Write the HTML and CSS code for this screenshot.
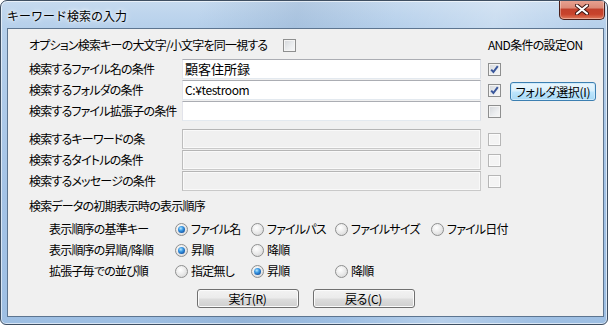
FILE: index.html
```html
<!DOCTYPE html>
<html lang="ja">
<head>
<meta charset="utf-8">
<title>キーワード検索の入力</title>
<link rel="stylesheet" href="styles.css">
</head>
<body>
<div class="window">
  <div class="titlebar">
    <span class="title">キーワード検索の入力</span>
    <div class="close">
      <svg width="14" height="11" viewBox="0 0 14 11">
        <path d="M2 1.5 L12 9.5 M12 1.5 L2 9.5" stroke="#3b1512" stroke-width="4" stroke-linecap="round"/>
        <path d="M2 1.5 L12 9.5 M12 1.5 L2 9.5" stroke="#ffffff" stroke-width="2.2" stroke-linecap="round"/>
      </svg>
    </div>
  </div>
  <div class="client">
    <div class="content">
      <div class="form-a">
        <div class="opt"><span class="lbl">オプション検索キーの大文字/小文字を同一視する</span><span class="cb"></span></div>
        <div class="and lbl">AND条件の設定ON</div>

        <span class="lbl fl">検索するファイル名の条件</span>
        <div class="tb">顧客住所録</div>
        <span class="cb checked"><svg width="11" height="11" viewBox="0 0 11 11"><path d="M2.2 5.6 L4.4 8 L8.8 2.2" fill="none" stroke="#3a579b" stroke-width="2"/></svg></span>

        <span class="lbl fl">検索するフォルダの条件</span>
        <div class="tb"><span class="latin">C:¥testroom</span></div>
        <span class="cb checked"><svg width="11" height="11" viewBox="0 0 11 11"><path d="M2.2 5.6 L4.4 8 L8.8 2.2" fill="none" stroke="#3a579b" stroke-width="2"/></svg></span>
        <button class="btn focus">フォルダ選択(I)</button>

        <span class="lbl fl">検索するファイル拡張子の条件</span>
        <div class="tb"></div>
        <span class="cb"></span>
      </div>

      <div class="form-b">
        <span class="lbl fl">検索するキーワードの条</span>
        <div class="tb disabled"></div>
        <span class="cb disabled"></span>

        <span class="lbl fl">検索するタイトルの条件</span>
        <div class="tb disabled"></div>
        <span class="cb disabled"></span>

        <span class="lbl fl">検索するメッセージの条件</span>
        <div class="tb disabled"></div>
        <span class="cb disabled"></span>
      </div>

      <div class="heading lbl">検索データの初期表示時の表示順序</div>

      <div class="radios">
        <span class="lbl rl">表示順序の基準キー</span>
        <label class="ro"><span class="rb on"></span><span class="lbl">ファイル名</span></label>
        <label class="ro"><span class="rb"></span><span class="lbl">ファイルパス</span></label>
        <label class="ro"><span class="rb"></span><span class="lbl">ファイルサイズ</span></label>
        <label class="ro"><span class="rb"></span><span class="lbl">ファイル日付</span></label>

        <span class="lbl rl">表示順序の昇順/降順</span>
        <label class="ro"><span class="rb on"></span><span class="lbl">昇順</span></label>
        <label class="ro"><span class="rb"></span><span class="lbl">降順</span></label>

        <span class="lbl rl">拡張子毎での並び順</span>
        <label class="ro"><span class="rb"></span><span class="lbl">指定無し</span></label>
        <label class="ro"><span class="rb on"></span><span class="lbl">昇順</span></label>
        <label class="ro"><span class="rb"></span><span class="lbl">降順</span></label>
      </div>
    </div>
    <div class="buttons">
      <button class="btn wide">実行(R)</button>
      <button class="btn wide">戻る(C)</button>
    </div>
  </div>
</div>
</body>
</html>
```

FILE: styles.css
```css
html, body {
  margin: 0;
  padding: 0;
  background: #ffffff;
}
body {
  font-family: "Noto Sans CJK JP", "Noto Sans CJK SC", sans-serif;
  font-size: 12px;
  color: #000;
}
.window {
  width: 608px;
  height: 325px;
  box-sizing: border-box;
  border: 1px solid #3f4f62;
  border-radius: 7px 7px 6px 6px;
  padding: 0 3px 7px 6px;
  display: flex;
  flex-direction: column;
  background:
    linear-gradient(100deg, rgba(255,255,255,0) 30%, rgba(120,150,185,0.25) 45%, rgba(255,255,255,0) 60%, rgba(255,255,255,0.25) 75%, rgba(255,255,255,0) 90%),
    linear-gradient(180deg, #c6daef 0%, #b6d0eb 8%, #a4c3e6 60%, #9ebfe3 100%);
  box-shadow: inset 0 0 0 1px rgba(255,255,255,0.6);
  overflow: hidden;
}
.titlebar {
  height: 27px;
  flex: none;
  display: flex;
  align-items: center;
  justify-content: space-between;
}
.title {
  font-size: 12px;
  line-height: 16px;
  margin-top: 2px;
  color: #000;
  text-shadow: 0 0 6px #fff, 0 0 3px #fff;
}
.close {
  align-self: flex-start;
  margin-top: -1px;
  margin-right: -1px;
  width: 46px;
  height: 20px;
  box-sizing: border-box;
  border: 1px solid #4a1f1a;
  border-top: none;
  border-radius: 0 0 5px 5px;
  background:
    linear-gradient(180deg, #e8a493 0%, #dc8b78 40%, #c2412c 50%, #c8432c 75%, #e07a5c 100%);
  box-shadow: inset 0 0 0 1px rgba(255,255,255,0.35);
  display: flex;
  align-items: center;
  justify-content: center;
}
.client {
  flex: 1;
  box-sizing: border-box;
  border: 1px solid #5d7590;
  background: #f0f0f0;
  padding-top: 6px;
}
.content {
  padding-left: 21px;
}
.lbl {
  font-size: 12px;
  line-height: 16px;
  white-space: nowrap;
  font-feature-settings: "palt";
  letter-spacing: -0.8px;
}
.form-a, .form-b {
  display: grid;
  grid-template-columns: 153px 299px 7px 13px 9px 86px;
  align-items: center;
}
.form-a {
  grid-template-rows: 23px 20px 20px 20px;
  row-gap: 1px;
}
.fl { grid-column: 1; }
.form-a > .tb, .form-b > .tb { grid-column: 2; }
.form-a > .cb, .form-b > .cb { grid-column: 4; }
.form-a > .btn { grid-column: 6; }
.opt {
  grid-column: 1 / 3;
  align-self: start;
  height: 20px;
  display: flex;
  align-items: center;
}
.opt .cb { margin-left: 16px; }
.and {
  grid-column: 4 / 7;
  align-self: start;
  height: 20px;
  display: flex;
  align-items: center;
  margin-left: 0;
  letter-spacing: -0.7px;
}
.form-b {
  margin-top: 8px;
  grid-template-rows: 20px 20px 20px;
  row-gap: 1px;
}
.tb {
  height: 20px;
  box-sizing: border-box;
  border: 1px solid;
  border-color: #abadb3 #dbdfe6 #e3e9ef #e2e3ea;
  background: #fff;
  font-size: 13px;
  line-height: 18px;
  padding-left: 2px;
  white-space: nowrap;
  overflow: hidden;
}
.latin {
  font-size: 12px;
  letter-spacing: -0.4px;
}
.tb.disabled {
  background: #f0f0f0;
  border-color: #b5b5b5 #c9c9c9 #c9c9c9 #bdbdbd;
  box-shadow: inset 0 0 0 1px #f9f9f9;
}
.cb {
  width: 13px;
  height: 13px;
  box-sizing: border-box;
  border: 1px solid #8e8f8f;
  background: linear-gradient(135deg, #d3d6da 0%, #eceef0 60%, #f7f7f7 100%);
  box-shadow: inset 0 0 0 1px #f4f4f4;
  display: flex;
  align-items: center;
  justify-content: center;
}
.cb svg { display: block; }
.cb.disabled {
  border-color: #b6b6b6;
  background: #f4f4f4;
  box-shadow: inset 0 0 0 1px #fbfbfb;
}
.btn {
  font-family: inherit;
  font-size: 12px;
  line-height: 15px;
  font-feature-settings: "palt";
  letter-spacing: -0.3px;
  color: #000;
  height: 19px;
  padding: 0;
  box-sizing: border-box;
  border: 1px solid #707070;
  border-radius: 3px;
  background: linear-gradient(180deg, #f2f2f2 0%, #ebebeb 48%, #dddddd 52%, #cfcfcf 100%);
  box-shadow: inset 0 0 0 1px #fbfbfb;
  white-space: nowrap;
}
.btn.focus {
  align-self: start;
  margin-top: 2px;
  width: 86px;
  border-color: #3c7fb1;
  background: linear-gradient(180deg, #eaf6fd 0%, #d9f0fc 48%, #bee6fd 52%, #a7d9f5 100%);
  box-shadow: inset 0 0 0 1px #cdeafb;
}
.heading {
  margin-top: 7px;
  height: 16px;
}
.radios {
  margin-top: 5px;
  padding-left: 20px;
  display: grid;
  grid-template-columns: 126px 76px 84px 96px auto;
  grid-template-rows: 20px 20px 20px;
  row-gap: 1px;
  align-items: center;
}
.rl { grid-column: 1; }
.ro {
  display: flex;
  align-items: center;
  gap: 3px;
}
.rb {
  width: 13px;
  height: 13px;
  box-sizing: border-box;
  border-radius: 50%;
  border: 1px solid #8e8f8f;
  background: radial-gradient(circle at 40% 35%, #ffffff 0%, #eeeeee 40%, #d2d2d2 100%);
  position: relative;
  flex: none;
}
.rb.on::after {
  content: "";
  position: absolute;
  left: 2px;
  top: 2px;
  width: 7px;
  height: 7px;
  border-radius: 50%;
  background: radial-gradient(circle at 40% 35%, #b9e8ff 0%, #3d9be4 35%, #1457a8 75%, #0d3f84 100%);
}
.buttons {
  margin-top: 8px;
  display: flex;
  justify-content: center;
  gap: 14px;
}
.btn.wide {
  width: 102px;
}
```
